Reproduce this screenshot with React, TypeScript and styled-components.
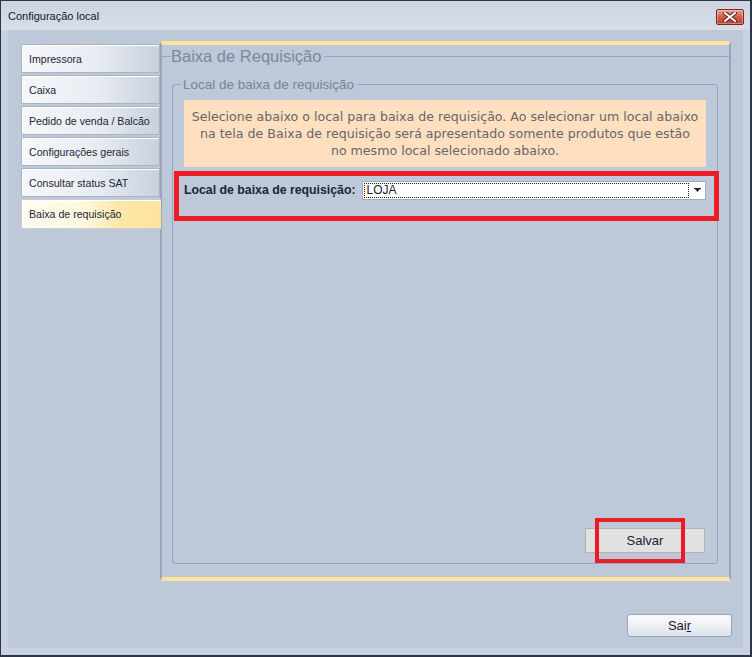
import React from 'react'
import styled, { createGlobalStyle } from 'styled-components'

const GlobalStyle = createGlobalStyle`
  html, body {
    margin: 0;
    padding: 0;
    background: #ffffff;
  }
  * {
    box-sizing: border-box;
  }
`

const Window = styled.div`
  width: 752px;
  height: 657px;
  display: flex;
  flex-direction: column;
  border: 1px solid #2e3547;
  border-right-width: 2px;
  border-bottom-width: 2px;
  font-family: 'Liberation Sans', Arial, sans-serif;
  background: #c9d2de;
`

const TitleBar = styled.div`
  height: 29px;
  display: flex;
  align-items: center;
  justify-content: space-between;
  padding: 0 6px 0 7px;
  background: linear-gradient(#cdd5e1, #d8dee8);
`

const Title = styled.span`
  font-size: 11px;
  color: #111827;
`

const CloseButton = styled.button`
  width: 28px;
  height: 16px;
  margin-top: 3px;
  padding: 0;
  display: flex;
  align-items: center;
  justify-content: center;
  border: 1px solid #74281f;
  border-radius: 2px;
  background: linear-gradient(#e8a28f, #d0604b 50%, #b8412f);
  box-shadow: inset 0 0 0 1px rgba(255, 255, 255, 0.35);
`

const Frame = styled.div`
  flex: 1;
  display: flex;
  flex-direction: column;
  padding: 0 7px 7px 7px;
`

const Body = styled.div`
  flex: 1;
  display: flex;
  flex-direction: column;
  padding: 11px 12px 11px 13px;
  background: #bdc8d8;
`

const Content = styled.div`
  flex: 1;
  display: flex;
`

const TabList = styled.div`
  width: 139px;
  display: flex;
  flex-direction: column;
  padding-top: 3px;
`

const Tab = styled.div<{ $active?: boolean }>`
  height: ${p => (p.$active ? 30 : 29)}px;
  margin: 0 ${p => (p.$active ? '-1px 0 0' : '1px 2px 0 2px')};
  margin-bottom: 2px;
  display: flex;
  align-items: center;
  padding-left: 7px;
  font-size: 10.6px;
  color: #1b2638;
  border: 1px solid ${p => (p.$active ? '#c8cfda' : '#a9b3c2')};
  border-right: ${p => (p.$active ? 'none' : '1px solid #a9b3c2')};
  border-radius: 2px 0 0 2px;
  background: ${p =>
    p.$active
      ? 'linear-gradient(90deg, #fffcf0 0%, #fff7e0 45%, #fde7a8 70%, #fde39c 100%)'
      : 'linear-gradient(90deg, #f6f7fa 0%, #e8ecf2 55%, #c9d1dd 100%)'};
  box-shadow: inset 1px 1px 0 #ffffff;
  position: relative;
  z-index: ${p => (p.$active ? 1 : 0)};
`

const Panel = styled.div`
  flex: 1;
  display: flex;
  flex-direction: column;
  border-top: 4px solid #fde49e;
  border-bottom: 4px solid #fde49e;
  border-left: 2px solid #9aa5b7;
  border-right: 2px solid #9aa5b7;
  border-radius: 0 3px 0 3px;
  padding-bottom: 13px;
`

const PageGroup = styled.fieldset`
  flex: 1;
  display: flex;
  flex-direction: column;
  margin: 2px 0 0 0;
  padding: 0 11px 0 10px;
  border: none;
  border-top: 1px solid #9aa5b7;
  min-width: 0;
`

const PageLegend = styled.legend`
  margin-left: -1px;
  padding: 0 3px 0 0;
  font-size: 16.5px;
  line-height: 18px;
  color: #7d879a;
`

const Group = styled.fieldset`
  flex: 1;
  display: flex;
  flex-direction: column;
  margin: 12px 0 0 0;
  padding: 8px 11px 10px 11px;
  border: 1px solid #9aa5b7;
  border-radius: 3px;
  min-width: 0;
`

const GroupLegend = styled.legend`
  margin-left: -3px;
  padding: 0 3px 0 2px;
  font-size: 13.5px;
  line-height: 15px;
  color: #7a8496;
`

const Notice = styled.div`
  height: 67px;
  display: flex;
  align-items: center;
  justify-content: center;
  text-align: center;
  padding: 0 2px;
  background: #fee0c1;
  font-family: 'DejaVu Sans', Verdana, sans-serif;
  font-size: 12.6px;
  line-height: 17px;
  color: #676767;
  white-space: nowrap;
`

const Highlight = styled.div`
  margin: 4px -13px 0 -10px;
  height: 50px;
  border: 5px solid #ec1c24;
  display: flex;
  align-items: flex-start;
  padding: 5px 8px 0 5px;
`

const FieldLabel = styled.label`
  font-size: 12.3px;
  font-weight: bold;
  color: #1b2438;
  line-height: 19px;
  margin-right: 6px;
  white-space: nowrap;
`

const Combo = styled.div`
  flex: 1;
  height: 19px;
  display: flex;
  align-items: stretch;
  background: #ffffff;
  border: 1px solid #a3adbd;
`

const ComboValue = styled.div`
  flex: 1;
  margin: 1px;
  padding-left: 2px;
  border: 1px dotted #1a1a1a;
  font-size: 12px;
  line-height: 13px;
  color: #1e1e1e;
`

const ComboArrow = styled.div`
  width: 15px;
  display: flex;
  align-items: center;
  justify-content: center;
`

const Spacer = styled.div`
  flex: 1;
`

const Actions = styled.div`
  display: flex;
  justify-content: flex-end;
  padding-right: 1px;
`

const FlatButton = styled.button`
  position: relative;
  width: 120px;
  height: 25px;
  padding: 0;
  background: #e1e1e1;
  border: 1px solid #b3b3b3;
  font-family: 'Liberation Sans', Arial, sans-serif;
  font-size: 13px;
  color: #172033;
`

const ButtonMark = styled.span`
  position: absolute;
  left: 9px;
  top: -11px;
  width: 90px;
  height: 45px;
  border: 4px solid #ec1c24;
  pointer-events: none;
`

const Footer = styled.div`
  display: flex;
  justify-content: flex-end;
  margin-top: 33px;
  margin-right: -1px;
`

const RoundButton = styled.button`
  width: 105px;
  height: 23px;
  padding: 0;
  border: 1px solid #9ba4b3;
  border-radius: 3px;
  background: linear-gradient(#fcfcfd, #eef0f4 50%, #dde2ea);
  font-family: 'Liberation Sans', Arial, sans-serif;
  font-size: 13px;
  color: #172033;
`

const tabs = [
  'Impressora',
  'Caixa',
  'Pedido de venda / Balcão',
  'Configurações gerais',
  'Consultar status SAT',
  'Baixa de requisição',
]

export default function App() {
  return (
    <>
      <GlobalStyle />
      <Window>
        <TitleBar>
          <Title>Configuração local</Title>
          <CloseButton aria-label="Fechar">
            <svg width="14" height="10" viewBox="0 0 14 10">
              <path
                d="M2 1 L12 9 M12 1 L2 9"
                stroke="#5a1a12"
                strokeWidth="4"
                strokeLinecap="square"
              />
              <path
                d="M2 1 L12 9 M12 1 L2 9"
                stroke="#ffffff"
                strokeWidth="2"
                strokeLinecap="square"
              />
            </svg>
          </CloseButton>
        </TitleBar>
        <Frame>
          <Body>
            <Content>
              <TabList>
                {tabs.map((t, i) => (
                  <Tab key={t} $active={i === tabs.length - 1}>
                    {t}
                  </Tab>
                ))}
              </TabList>
              <Panel>
                <PageGroup>
                  <PageLegend>Baixa de Requisição</PageLegend>
                  <Group>
                    <GroupLegend>Local de baixa de requisição</GroupLegend>
                    <Notice>
                      <span>
                        Selecione abaixo o local para baixa de requisição. Ao selecionar um local abaixo
                        <br />
                        na tela de Baixa de requisição será apresentado somente produtos que estão
                        <br />
                        no mesmo local selecionado abaixo.
                      </span>
                    </Notice>
                    <Highlight>
                      <FieldLabel>Local de baixa de requisição:</FieldLabel>
                      <Combo>
                        <ComboValue>LOJA</ComboValue>
                        <ComboArrow>
                          <svg width="7" height="5" viewBox="0 0 7 5">
                            <path d="M0 0 H7 V1 H0 Z M1 1 H6 L3.5 4 Z" fill="#1e2433" />
                          </svg>
                        </ComboArrow>
                      </Combo>
                    </Highlight>
                    <Spacer />
                    <Actions>
                      <FlatButton>
                        Salvar
                        <ButtonMark />
                      </FlatButton>
                    </Actions>
                  </Group>
                </PageGroup>
              </Panel>
            </Content>
            <Footer>
              <RoundButton>
                Sai<u>r</u>
              </RoundButton>
            </Footer>
          </Body>
        </Frame>
      </Window>
    </>
  )
}
